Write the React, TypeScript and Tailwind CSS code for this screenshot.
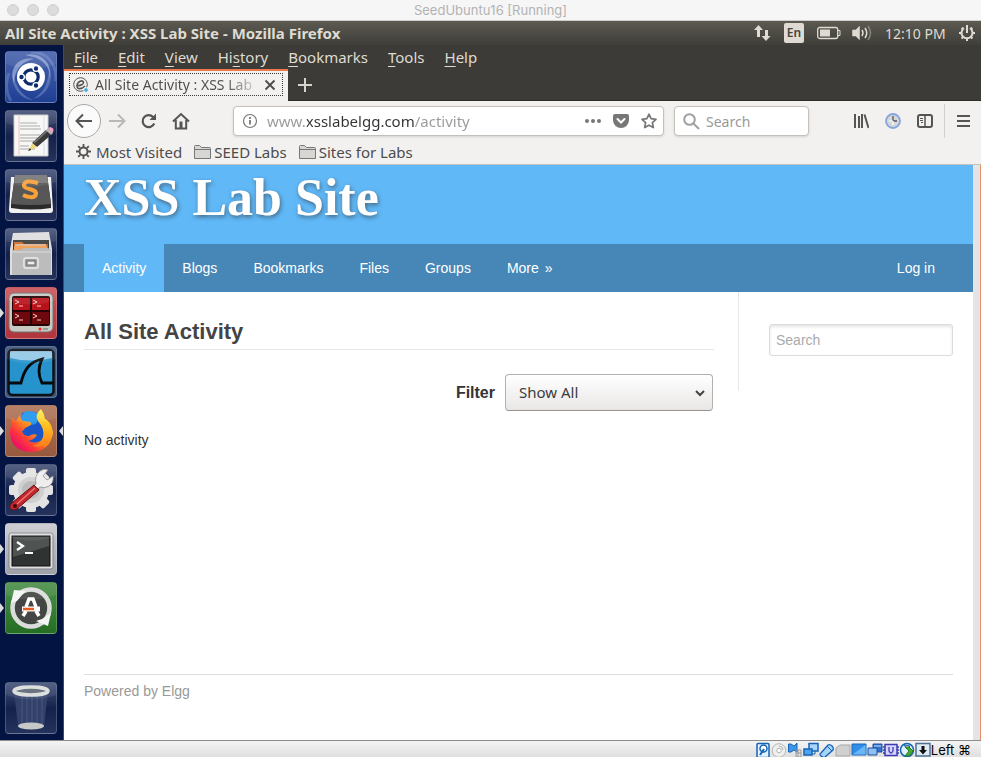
import React from "react";

type Kids = { children: React.ReactNode };

const ui = "font-[Noto_Sans,sans-serif]";

function Tile({ label, bg, running, focused, children }: Kids & { label: string; bg: string; running?: boolean; focused?: boolean }) {
  return (
    <div className="relative flex w-full pl-[5px]">
      {running && <span className="absolute top-[21px] left-0 border-y-[5px] border-l-[4px] border-y-transparent border-l-[#dcdcdc]" />}
      <button aria-label={label} className={`size-[52px] overflow-hidden rounded-[4px] border border-white/20 ${bg}`}>
        <svg viewBox="0 0 52 52" className="-m-px size-[52px] max-w-none">
          {children}
          <path d="M1 1h50v12Q26 22 1 13z" fill="#fff" opacity=".08" />
        </svg>
      </button>
      {focused && <span className="absolute top-[21px] right-0 border-y-[5px] border-r-[4px] border-y-transparent border-r-[#dcdcdc]" />}
    </div>
  );
}

const slate = "bg-linear-to-b from-[#47547a] via-[#14214b] to-[#24325c]";

function Launcher() {
  return (
    <nav aria-label="Launcher" className="flex w-16 shrink-0 flex-col items-center gap-[7px] border-r border-[#3b4a70] bg-[#031342] py-[6px]">
      <Tile label="Dash" bg="bg-linear-to-b from-[#4a64ad] to-[#1f3f94]">
        <path d="M20 4c16-4 28 8 25 24 0-12-6-21-25-24zM9 32C3 17 14 5 29 8 17 10 10 18 9 32z" fill="#c7d5f5" opacity=".5" />
        <path d="M8 20c-3 14 6 28 20 29-10-4-18-12-20-29zM44 19c5 12-3 26-16 29 10-6 15-14 16-29z" fill="#c7d5f5" opacity=".28" />
        <path d="M26 1C42 1 52 13 51 30M6 50C0 40 1 30 4 22" fill="none" stroke="#b9c9ee" opacity=".25" strokeWidth="3" />
        <circle cx="26" cy="26" r="14" fill="#fff" />
        <circle cx="26" cy="26" r="7.2" fill="none" stroke="#0d2a6d" strokeWidth="3.2" />
        <g fill="#0d2a6d" stroke="#fff" strokeWidth="1.4">
          <circle cx="16.500" cy="26" r="2.900" /><circle cx="31" cy="17.500" r="2.900" /><circle cx="31" cy="34.500" r="2.900" />
        </g>
      </Tile>
      <Tile label="Text Editor" bg={slate}>
        <path d="M9 5h34v41H9z" fill="#f7f7f5" stroke="#c9c9c9" />
        <path d="M14 6v39" stroke="#efb4b4" strokeWidth=".8" /><path d="M39 6v39" stroke="#c5d6ef" strokeWidth=".8" />
        <path d="M15 13h17M15 16h20M15 19h21M15 25h20M15 28h21M15 31h14M15 36h9M15 39h15" stroke="#a9a9a9" strokeWidth="1" />
        <path d="M27 33 41 20l5 5-14 12z" fill="#3a3a3a" /><path d="m29 33 13-12" stroke="#777" strokeWidth="1.500" />
        <path d="m41 20 2-2 5 5-2 2z" fill="#b9b9b9" /><path d="m43 18 2-1q5 1 3 5l-1 1z" fill="#f5a0c5" />
        <path d="m27 33 5 4-8 4z" fill="#ecd87c" /><path d="m25 38 1 2-3 1z" fill="#222" />
      </Tile>
      <Tile label="Sublime Text" bg={slate}>
        <path d="M6 8 4 41q0 3 3 3h38q3 0 3-3L46 8z" fill="#f2f2f2" />
        <path d="M10 6h32l4 29v4q-20 3-40 0v-4z" fill="#2b2b2b" />
        <path d="M10 6h32l4 29q-20 2-40 0z" fill="#575757" />
        <path d="M10 6h32l1 8H9z" fill="#777" />
        <path d="M33 14q-13-4-14 2c-1 5 13 3 12 9-1 5-9 3-13 1" fill="none" stroke="#f9a03a" strokeWidth="4" />
      </Tile>
      <Tile label="Files" bg={slate}>
        <path d="m8 5 36-1 3 17v26H5V21z" fill="#dedede" />
        <path d="M8 12h36v11H8z" fill="#3c3c3c" />
        <path d="M9 14h8l2 2h24v7H9z" fill="#c96b28" /><path d="M9 18h33v5H9z" fill="#f0a25b" /><path d="M10 17h31" stroke="#fff" />
        <path d="M7 22h9l2-2h25l3 2v25H7z" fill="#bcbcbc" />
        <path d="M7 24h39" stroke="#dedede" />
        <rect x="19" y="30" width="14" height="10" rx="2" fill="#a0a0a0" stroke="#eee" strokeWidth="1.500" />
        <rect x="22" y="33" width="8" height="4" fill="#eee" stroke="#666" />
      </Tile>
      <Tile running label="Terminator" bg="bg-linear-to-b from-[#c9555a] to-[#b0353c]">
        <rect x="4" y="6" width="44" height="39" rx="5" fill="#c7c9c2" stroke="#70716c" />
        <rect x="7" y="9" width="38" height="30" rx="2" fill="#240405" />
        <path d="M8 11h17v12H8zM27 11h17v12H27z" fill="#b9121a" /><path d="M8 25h17v12H8zM27 25h17v12H27z" fill="#6d080d" />
        <path d="m10 13 4 2-4 2M14 19h4M28 13l4 2-4 2M32 19h4M10 27l4 2-4 2M14 33h4M28 27l4 2-4 2M32 33h4" stroke="#f3c9c9" fill="none" />
        <circle cx="35" cy="42" r="1.500" fill="#f22" /><path d="M38 42h5" stroke="#999" strokeWidth="2" />
      </Tile>
      <Tile label="Wireshark" bg="bg-[#3c5578]">
        <rect x="3.500" y="4" width="45" height="45" rx="4" fill="#2793cc" stroke="#0c1017" strokeWidth="2.500" />
        <path d="M5 5h42v7Q26 17 5 12z" fill="#fff" opacity=".5" />
        <path d="M4 37h12c3-13 8-21 21-24-4 8-4 16 0 24h11" fill="none" stroke="#060a0d" strokeWidth="2.800" />
      </Tile>
      <Tile running focused label="Firefox" bg="bg-linear-to-b from-[#b1765b] to-[#98593d]">
        <defs>
          <linearGradient id="fox" x1=".85" y1=".15" x2=".15" y2=".8"><stop offset="0" stopColor="#ffd52e" /><stop offset=".45" stopColor="#ff8a1c" /><stop offset=".75" stopColor="#ff3a3a" /><stop offset="1" stopColor="#ee1261" /></linearGradient>
          <linearGradient id="tail" x1="0" y1="0" x2="0" y2="1"><stop offset="0" stopColor="#fff04a" /><stop offset=".5" stopColor="#ffb91e" /><stop offset="1" stopColor="#ff7a1c" /></linearGradient>
        </defs>
        <path d="M17 8q10-4 17 1l7 14-4 14-12 3-10-8z" fill="#1b56c8" />
        <path d="M19 7q8-3 15 3l-3 9-10 2-6-7z" fill="#2195ee" />
        <path d="M7 12q1 3 4 4l4-6q0 4 3 6l7 1q3 2-1 4l-4 2q-1 3-3 3 1 5 7 5 4-3 8-1-3 5-9 6 10 4 16-3 6-8 4-16l5 10Q46 46 26 47 6 46 5 28q0-6 2-8-1-4 0-8z" fill="url(#fox)" />
        <path d="M36 4q-7 6-3 12 7 8 5 16-3 8-11 9 14 3 19-7 4-9-2-17-3-3-4-3-1-6-4-10z" fill="url(#tail)" />
      </Tile>
      <Tile label="System Settings" bg={slate}>
        <g fill="#e3e3e3">
          <circle cx="26" cy="26" r="18" />
          <rect x="21" y="4" width="10" height="44" rx="2" />
          <rect x="21" y="4" width="10" height="44" rx="2" transform="rotate(45 26 26)" />
          <rect x="21" y="4" width="10" height="44" rx="2" transform="rotate(90 26 26)" />
          <rect x="21" y="4" width="10" height="44" rx="2" transform="rotate(135 26 26)" />
        </g>
        <circle cx="26" cy="26" r="13" fill="#cfcfcf" /><circle cx="26" cy="26" r="9" fill="#bbb" />
        <path d="M31 20q-2-8 4-13 4-3 8-1l-5 6 4 4 6-4q1 7-4 10-4 3-9 1l-3 3-4-4z" fill="#eee" stroke="#888" strokeWidth=".8" />
        <path d="m29 21 5 5-22 19q-5 2-7-1-1-3 3-6z" fill="#c3272b" stroke="#6c1115" />
        <path d="M30 24 12 40" stroke="#e87875" strokeWidth="1.500" /><circle cx="10" cy="42" r="2" fill="#3e0b0d" />
      </Tile>
      <Tile running label="Terminal" bg="bg-linear-to-b from-[#c9cad0] to-[#9fa1a8]">
        <rect x="4" y="10" width="44" height="36" rx="2" fill="#dedede" stroke="#83848a" />
        <rect x="7" y="13" width="38" height="30" fill="#2f3331" stroke="#111" />
        <path d="M8 14h36v9L8 34z" fill="#4f5351" />
        <path d="m12 19 6 4-6 4" fill="none" stroke="#fff" strokeWidth="2.200" /><path d="M20 30h8" stroke="#fff" strokeWidth="2" />
      </Tile>
      <Tile running label="Software Updater" bg="bg-linear-to-b from-[#4d914b] to-[#246d22]">
        <circle cx="26" cy="26" r="16" fill="#454545" />
        <circle cx="26" cy="26" r="18.500" fill="none" stroke="#dcdcdc" strokeWidth="4.500" />
        <path d="m6 21 3-13 12 1-4 4-5 6z" fill="#f5f5f5" /><path d="m46 31-3 13-12-5 6-2z" fill="#f5f5f5" />
        <path d="m18 34 3-5M34 34l-3-5M21 25l3-8h4l3 8" fill="none" stroke="#fff" strokeWidth="3.500" />
        <path d="M17 27h18" stroke="#fff" strokeWidth="5" /><path d="M18 27h11" stroke="#ed5b20" strokeWidth="2.500" />
      </Tile>
      <div className="mt-auto w-full">
        <Tile label="Trash" bg={slate}>
          <path d="m9 10 4 34q13 6 26 0l4-34z" fill="#33416a" />
          <path d="M17 13v30M22 13v32M27 13v32M32 13v32M37 13v29" stroke="#4f5d84" strokeWidth=".8" />
          <ellipse cx="26" cy="44" rx="13" ry="3.500" fill="#c5cac8" />
          <ellipse cx="26" cy="9" rx="17" ry="4" fill="#5f6874" stroke="#dadddb" strokeWidth="3.500" />
        </Tile>
      </div>
    </nav>
  );
}

function SystemPanel() {
  return (
    <header className={`flex h-6 items-center bg-linear-to-b from-[#5c5a51] to-[#3f3e39] pr-[5px] pl-[5px] text-[#dfdbd2] ${ui}`}>
      <h1 className="flex-1 text-[15px] leading-5 font-bold">All Site Activity : XSS Lab Site - Mozilla Firefox</h1>
      <div className="flex items-center">
        <svg width="18" height="18" viewBox="0 0 18 18" fill="#dfdbd2"><path d="M5.500 1 10 6H7v7H4V6H1zM13 17l4.500-5H15V6h-3v6H8.500z" /></svg>
        <span className="ml-[13px] flex h-5 w-5 items-center justify-center rounded-[2px] bg-[#dfdbd2] text-[12px] font-semibold text-[#45443f]">En</span>
        <svg className="ml-[13px]" width="24" height="14" viewBox="0 0 24 14"><rect x=".7" y="1.500" width="20" height="11" rx="2" fill="none" stroke="#dfdbd2" strokeWidth="1.300" /><path d="M3 3.500h10v7H3z" fill="#dfdbd2" /><path d="M21 4.500h2v5h-2" fill="none" stroke="#dfdbd2" /></svg>
        <svg className="ml-[11px]" width="20" height="18" viewBox="0 0 20 18" fill="none" stroke="#dfdbd2" strokeWidth="1.500"><path d="M1 6.500h3l3-3v11l-3-3H1z" fill="#dfdbd2" /><path d="M10 6q2 3 0 6M13 4q3.500 5 0 10" /><path d="M16 2q5 7 0 14" opacity=".4" /></svg>
        <span className="ml-[13px] w-[61px] text-[14px] whitespace-nowrap">12:10 PM</span>
        <svg className="ml-3" width="18" height="18" viewBox="0 0 18 18" fill="none" stroke="#dfdbd2"><path d="M9 1v8" strokeWidth="2" /><path d="M6 4.200a5.500 5.500 0 1 0 6 0" strokeWidth="2" /><path d="M3.700 3.700 5 5M1 9h2.500M3.500 14.500 5 13M9 14.500V17M13 13l1.500 1.500M14.500 9H17M13 5l1.300-1.300" strokeWidth="2" /></svg>
      </div>
    </header>
  );
}

function MenuBar() {
  const items = [
    ["", "F", "ile"], ["", "E", "dit"], ["", "V", "iew"], ["Hi", "s", "tory"],
    ["", "B", "ookmarks"], ["", "T", "ools"], ["", "H", "elp"],
  ];
  return (
    <div role="menubar" className={`flex h-6 items-center gap-5 pl-[10px] text-[15px] leading-5 text-[#dfdbd2] ${ui}`}>
      {items.map(([a, b, c]) => (
        <button key={b + c} role="menuitem">{a}<span className="underline underline-offset-3">{b}</span>{c}</button>
      ))}
    </div>
  );
}

function TabStrip() {
  return (
    <div className="flex h-8 border-b border-[#2c2b28]">
      <div className="-mb-px flex w-56 border-t-2 border-[#ec7a4d] bg-[#f2f1f0] px-[5px] pt-[2px] pb-[5px]">
        <div role="tab" className="flex min-w-0 flex-1 items-center border border-dotted border-[#3c3b37] pl-[3px]">
          <svg className="shrink-0" width="16" height="16" viewBox="0 0 16 16" fill="none" stroke="#555"><circle cx="7.500" cy="7.500" r="6.800" /><path d="M4 9q7-1 6.500-4C9 2.500 4 5 4 9c0 4 5 3 8 0" strokeWidth="1.600" /><circle cx="13" cy="13" r="2.300" fill="#3aa7dc" stroke="#f2f1f0" /></svg>
          <span className={`ml-[6px] flex-1 bg-linear-to-r from-[#4c4c4c] from-80% to-[#4c4c4c]/10 bg-clip-text text-[14px] whitespace-nowrap text-transparent ${ui}`}>All Site Activity : XSS Lab</span>
          <button aria-label="Close tab" className="mx-[6px]"><svg width="12" height="12" viewBox="0 0 12 12" stroke="#4c4c4c" strokeWidth="1.800"><path d="m1.500 1.500 9 9m0-9-9 9" /></svg></button>
        </div>
      </div>
      <button aria-label="New tab" className="ml-[10px]"><svg width="14" height="14" viewBox="0 0 14 14" stroke="#d8d4cb" strokeWidth="2"><path d="M7 0v14M0 7h14" /></svg></button>
    </div>
  );
}

function Toolbar() {
  return (
    <div className="flex h-10 items-center pr-[10px] pl-[3px]">
      <button aria-label="Back" className="flex size-[34px] items-center justify-center rounded-full border border-[#a9a8a6] bg-[#fbfbfb]">
        <svg width="18" height="16" viewBox="0 0 18 16" fill="none" stroke="#555" strokeWidth="2"><path d="M17 8H2M8 1.500 1.500 8 8 14.500" /></svg>
      </button>
      <button aria-label="Forward" className="ml-[7px]"><svg width="18" height="16" viewBox="0 0 18 16" fill="none" stroke="#b9b8b6" strokeWidth="2"><path d="M1 8h15M10 1.500 16.500 8 10 14.500" /></svg></button>
      <button aria-label="Reload" className="ml-[14px]"><svg width="18" height="18" viewBox="0 0 18 18" fill="none" stroke="#555" strokeWidth="2.200"><path d="M14.200 11.500A6 6 0 1 1 13 5l2 2" /><path d="M16 1.500V8H9.500z" fill="#555" stroke="none" /></svg></button>
      <button aria-label="Home" className="ml-[14px]"><svg width="18" height="18" viewBox="0 0 18 18" fill="none" stroke="#555" strokeWidth="2"><path d="M1 9.500 9 2l8 7.500M3.800 8v8.500h10.400V8" /><path d="M9 9.500v7" strokeWidth="3" /></svg></button>
      <div className="ml-[43px] flex h-[30px] flex-1 items-center rounded-[4px] border border-[#c4c1bd] bg-white px-2 shadow-sm">
        <svg className="shrink-0" width="16" height="16" viewBox="0 0 16 16" fill="none" stroke="#777"><circle cx="8" cy="8" r="6.500" strokeWidth="1.200" /><path d="M8 7v4.500M8 4v2" strokeWidth="1.800" /></svg>
        <input aria-label="Address" defaultValue="www.xsslabelgg.com/activity" className={`ml-[9px] min-w-0 flex-1 bg-[linear-gradient(90deg,#999_40px,#333_40px,#333_147px,#999_147px)] bg-clip-text text-[15px] text-transparent outline-none ${ui}`} />
        <button aria-label="Page actions"><svg width="16" height="16" viewBox="0 0 16 16" fill="#777"><circle cx="2" cy="8" r="2" /><circle cx="8" cy="8" r="2" /><circle cx="14" cy="8" r="2" /></svg></button>
        <button aria-label="Save to Pocket" className="ml-3"><svg width="16" height="16" viewBox="0 0 16 16"><path d="M2 1h12q2 0 2 2v4a8 8 0 0 1-16 0V3q0-2 2-2z" fill="#777" /><path d="m4.500 6 3.500 3.500L11.500 6" fill="none" stroke="#fff" strokeWidth="2" strokeLinecap="round" /></svg></button>
        <button aria-label="Bookmark this page" className="ml-3 -mr-[2px]"><svg width="16" height="16" viewBox="0 0 16 16" fill="none" stroke="#777" strokeWidth="1.700" strokeLinejoin="round"><path d="m8 1.200 2.100 4.500 4.900.6-3.600 3.400.9 4.900L8 12.200l-4.300 2.400.9-4.900L1 6.300l4.900-.6z" /></svg></button>
      </div>
      <label className="ml-[10px] flex h-[30px] w-[135px] items-center rounded-[4px] border border-[#c4c1bd] bg-white px-2 shadow-sm">
        <svg className="shrink-0" width="17" height="17" viewBox="0 0 17 17" fill="none" stroke="#a0a0a0" strokeWidth="2"><circle cx="6.500" cy="6.500" r="5.300" /><path d="m10.500 10.500 5.500 5.500" /></svg>
        <input aria-label="Web search" placeholder="Search" className={`ml-[6px] w-full min-w-0 text-[14px] outline-none placeholder:text-[#999] ${ui}`} />
      </label>
      <button aria-label="Library" className="ml-11"><svg width="16" height="16" viewBox="0 0 16 16" stroke="#555" strokeWidth="2"><path d="M2 1v14M6 3v12M9 1v14M11.500 1.500l4 13.500" /></svg></button>
      <button aria-label="Clock" className="ml-4"><svg width="16" height="16" viewBox="0 0 16 16"><circle cx="8" cy="8" r="7" fill="#d5d7da" stroke="#86a5df" strokeWidth="1.800" /><path d="M8 3v5h4" fill="none" stroke="#555" strokeWidth="1.300" /><path d="M8 8v4M4 8h4" stroke="#fff" strokeWidth="1.200" /></svg></button>
      <button aria-label="Sidebars" className="ml-4"><svg width="16" height="16" viewBox="0 0 16 16" fill="none" stroke="#555"><rect x="1" y="2" width="14" height="12" rx="2" strokeWidth="2" /><path d="M8 2v12" strokeWidth="1.500" /><path d="M3 5.500h3M3 7.500h3M4 9.500h2" /></svg></button>
      <span className="mr-3 ml-[11px] h-[34px] w-px bg-[#d2d0cd]" />
      <button aria-label="Open menu" className="mr-px"><svg width="13" height="14" viewBox="0 0 13 14" stroke="#555" strokeWidth="2"><path d="M0 2h13M0 7h13M0 12h13" /></svg></button>
    </div>
  );
}

function Folder() {
  return <svg width="17" height="14" viewBox="0 0 17 14" fill="#d8d6d3" stroke="#777"><path d="M.5 13.500v-12q0-1 1-1h4l2 2h8q1 0 1 1v10z" /><path d="M.5 4.500h16" /></svg>;
}

function BookmarksBar() {
  return (
    <div className={`flex h-[23px] items-center gap-3 pb-[2px] pl-3 text-[15px] leading-5 text-[#4c4c4c] ${ui}`}>
      <button className="flex items-center gap-[5px]">
        <svg width="15" height="15" viewBox="0 0 15 15" fill="none" stroke="#555" strokeWidth="2"><circle cx="7.500" cy="7.500" r="4" /><path d="M7.500 0v3M7.500 12v3M0 7.500h3M12 7.500h3M2.200 2.200l2 2M10.800 10.800l2 2M2.200 12.800l2-2M10.800 4.200l2-2" strokeWidth="1.800" /></svg>
        Most Visited
      </button>
      <button className="flex items-center gap-[3px]"><Folder />SEED Labs</button>
      <button className="flex items-center gap-[3px]"><Folder />Sites for Labs</button>
    </div>
  );
}

function Site() {
  const links = ["Blogs", "Bookmarks", "Files", "Groups"];
  return (
    <div className="flex min-h-0 flex-1 flex-col bg-white font-[Liberation_Sans,Arial,sans-serif] text-[14px] text-[#333]">
      <div className="h-[79px] bg-[#60b8f7] px-5 pt-[5px]">
        <a href="#home" className="font-[Liberation_Serif,serif] text-[52px] leading-[56px] font-bold text-white [text-shadow:1px_2px_4px_#33333399]">XSS Lab Site</a>
      </div>
      <nav aria-label="Site" className="flex h-12 items-stretch bg-[#4787b8] px-5 text-white">
        <a href="#activity" className="flex items-center bg-[#60b8f7] px-[18px]">Activity</a>
        {links.map((l) => <a key={l} href={`#${l}`} className="flex items-center px-[18px]">{l}</a>)}
        <a href="#more" className="flex items-center gap-[6px] px-[18px]">More <span>»</span></a>
        <a href="#login" className="ml-auto flex items-center px-[18px]">Log in</a>
      </nav>
      <div className="flex flex-1 items-start px-5">
        <main className="flex-1 pt-[27px] pr-6">
          <h2 className="border-b border-[#e6e6e6] pb-1 text-[22px] leading-[26px] font-bold text-[#444]">All Site Activity</h2>
          <div className="mt-6 flex items-center justify-end gap-[10px] pr-px">
            <label htmlFor="filter" className="text-[16px] font-bold">Filter</label>
            <div className="relative">
              <select id="filter" className={`h-[37px] w-52 appearance-none rounded-[4px] border border-[#b3b0ad] border-b-[#969391] bg-linear-to-b from-white to-[#e9e7e6] px-[13px] text-[15px] text-[#3c3c3c] ${ui}`}><option>Show All</option></select>
              <svg className="pointer-events-none absolute top-4 right-2" width="10" height="7" viewBox="0 0 10 7" fill="none" stroke="#444" strokeWidth="2"><path d="m1 1 4 4 4-4" /></svg>
            </div>
          </div>
          <p className="mt-[19px] leading-5">No activity</p>
        </main>
        <aside className="h-[99px] w-[215px] border-l border-[#e6e6e6] pt-8 pl-[30px]">
          <input aria-label="Search site" placeholder="Search" className="h-8 w-full rounded-[3px] border border-[#dcdcdc] px-[6px] shadow-[inset_0_2px_3px_#0000001a] placeholder:text-[#aaa]" />
        </aside>
      </div>
      <footer className="mx-5 h-[66px] border-t border-[#dedede] pt-[6px] leading-5"><a href="#elgg" className="text-[#999]">Powered by Elgg</a></footer>
    </div>
  );
}

function StatusIcon({ children }: Kids) {
  return <svg width="16" height="15" viewBox="0 0 16 15" fill="none" stroke="#1764b5">{children}</svg>;
}

function StatusBar() {
  return (
    <footer className="flex h-[17px] items-end justify-end border-t border-[#8c8c8c] bg-linear-to-b from-[#f4f4f4] to-[#dfdfdf] pr-[10px]">
      <StatusIcon><rect x="2" y="1.500" width="12" height="14" rx="1" fill="#e4f3ff" strokeWidth="1.500" /><circle cx="8.500" cy="6.500" r="3.500" fill="#fff" strokeWidth="1.500" /><path d="m5 13 4-6" strokeWidth="2" /></StatusIcon>
      <StatusIcon><g stroke="#b5b5b5"><circle cx="8" cy="8.500" r="6.800" fill="#eee" /><circle cx="8" cy="8.500" r="2.200" fill="#fff" /><path d="M8 4a4 4 0 0 1 4 4" /></g></StatusIcon>
      <StatusIcon><path d="M1.500 2H4l3 2 3-3v9L7 8 4 10H1.500z" fill="#3d95e8" /><path d="M9 8h5v7H9zM9 11h5M11 8v7" stroke="#999" /></StatusIcon>
      <StatusIcon><path d="M6 1.500h9v7.500H6z" fill="#a9d5fa" strokeWidth="1.500" /><path d="M1 7h8v6H1z" fill="#4ea5ef" strokeWidth="1.500" /><path d="M12 9v3h-3" /></StatusIcon>
      <StatusIcon><path d="m2 11 7-8q2-1 4 1t1 4l-8 7q-2 1-4-1t0-3z" fill="#a7d5fa" strokeWidth="1.300" /><path d="m8 4 5 5" /></StatusIcon>
      <StatusIcon><path d="M1 14V6l4-3h10v11z" fill="#d0d0d0" stroke="#a9a9a9" /></StatusIcon>
      <StatusIcon><path d="M1 2h14v11H1z" fill="#2e8ee8" /><path d="M1.500 12.500 14.500 3v9.500z" fill="#69b6f6" stroke="none" /></StatusIcon>
      <StatusIcon><path d="M6 2h9v8H6z" fill="#2e72cf" stroke="#204d9b" /><path d="M1 6h9v7H1z" fill="#8ec0f4" stroke="#204d9b" /><path d="M7 4h7" stroke="#cde4ff" /></StatusIcon>
      <StatusIcon><rect x="2" y="2.500" width="12" height="11" fill="#d6d5ff" stroke="#3e3cb0" strokeWidth="1.500" /><path d="M6 5v4q2 4 4 0V5M0 5h2M0 8h2M0 11h2M14 5h2M14 8h2M14 11h2" stroke="#3e3cb0" strokeWidth="1.300" /></StatusIcon>
      <StatusIcon><circle cx="8" cy="8" r="6.500" fill="#ddf1ff" strokeWidth="1.500" /><path d="m5 3 6 1-3 3z" fill="#fff" /><path d="M6 5h4l4 4-4 5H6l4-5z" fill="#45ae32" stroke="#267b1b" /></StatusIcon>
      <StatusIcon><rect x="1" y="1.500" width="14" height="12.500" fill="#e0eaf4" stroke="#4d7192" strokeWidth="1.500" /><path d="M6.500 4h3v4H12l-4 4.500L4 8h2.500z" fill="#111" stroke="none" /></StatusIcon>
      <span className="text-[13px] leading-[13px] whitespace-nowrap text-black font-[Inter,sans-serif]">Left ⌘</span>
    </footer>
  );
}

export default function App() {
  return (
    <div className="flex min-h-screen flex-col">
      <div className="grid h-[21px] grid-cols-[1fr_auto_1fr] items-center border-b border-[#cfcfcf] bg-[#f6f6f6] px-[7px]">
        <div className="flex gap-2">
          <button aria-label="Close" className="size-3 rounded-full border border-[#cfcfcf] bg-[#dcdcdc]" />
          <button aria-label="Minimize" className="size-3 rounded-full border border-[#cfcfcf] bg-[#dcdcdc]" />
          <button aria-label="Zoom" className="size-3 rounded-full border border-[#cfcfcf] bg-[#dcdcdc]" />
        </div>
        <span className="text-[13px] leading-4 text-[#b3b3b3] font-[Inter,sans-serif]">SeedUbuntu16 [Running]</span>
      </div>
      <SystemPanel />
      <div className="flex flex-1">
        <Launcher />
        <div className="flex min-w-0 flex-1 flex-col bg-[#3c3b37]">
          <MenuBar />
          <TabStrip />
          <div className="border-b border-[#c4c2bf] bg-[#f2f1f0]"><Toolbar /><BookmarksBar /></div>
          <div className="flex flex-1 border-r border-[#e88f6c] bg-[#e4e4e4] pr-[7px]"><Site /></div>
        </div>
      </div>
      <StatusBar />
    </div>
  );
}
